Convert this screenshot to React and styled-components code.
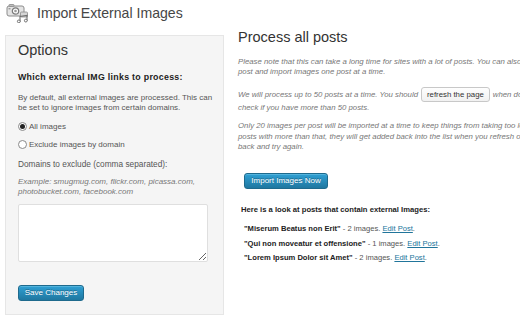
import React from 'react';
import styled, { createGlobalStyle } from 'styled-components';

const Global = createGlobalStyle`
  html, body { margin: 0; padding: 0; background: #fff; overflow: hidden; }
  body { font-family: "Liberation Sans", Arial, sans-serif; color: #333; }
  * { box-sizing: border-box; }
`;

const Page = styled.div`
  width: 520px;
  height: 320px;
  overflow: hidden;
  padding-left: 5px;
`;

const Header = styled.div`
  display: flex;
  align-items: center;
  height: 26px;
  gap: 8px;
  padding-left: 1px;
`;

const Title = styled.h1`
  margin: 0;
  font-size: 14.1px;
  font-weight: 400;
  color: #464646;
  line-height: 18px;
`;

const Columns = styled.div`
  display: flex;
  align-items: flex-start;
  margin-top: 2px;
`;

const Panel = styled.div`
  flex: 0 0 219px;
  height: 280px;
  margin-top: 7px;
  padding: 6px 8px 0 12px;
  background: #f5f5f5;
  border: 1px solid #e6e6e6;
  display: flex;
  flex-direction: column;
  align-items: flex-start;
`;

const PanelTitle = styled.h2`
  margin: 0;
  font-size: 14.5px;
  font-weight: 400;
  line-height: 16px;
  color: #333;
`;

const Label = styled.div`
  margin-top: ${p => p.$mt || 0}px;
  margin-left: ${p => p.$ml || 0}px;
  font-size: ${p => p.$size || 8}px;
  font-weight: 700;
  line-height: 11px;
  color: #222;
  letter-spacing: ${p => p.$ls || 0}px;
  white-space: nowrap;
`;

const Text = styled.p`
  margin: ${p => p.$mt || 0}px 0 0;
  font-size: ${p => p.$size || 8}px;
  line-height: ${p => p.$lh || 10}px;
  color: ${p => (p.$italic ? '#777' : '#555')};
  font-style: ${p => (p.$italic ? 'italic' : 'normal')};
  white-space: ${p => (p.$nowrap ? 'nowrap' : 'normal')};
`;

const RadioRow = styled.label`
  display: flex;
  align-items: center;
  gap: 2px;
  height: 12px;
  margin-top: ${p => p.$mt || 0}px;
  font-size: 8px;
  color: #555;
`;

const Radio = styled.span`
  width: 9px;
  height: 9px;
  border-radius: 50%;
  border: 1px solid #8a8a8a;
  background: #fff;
  display: flex;
  align-items: center;
  justify-content: center;
  &::after {
    content: '';
    width: 5px;
    height: 5px;
    border-radius: 50%;
    background: ${p => (p.$checked ? '#222' : 'transparent')};
  }
`;

const TextArea = styled.textarea`
  margin-top: 7px;
  width: 190px;
  height: 58px;
  border: 1px solid #dfdfdf;
  border-radius: 2px;
  background: #fff;
  font-family: inherit;
  font-size: 8px;
  padding: 2px;
`;

const BlueButton = styled.button`
  margin-top: ${p => p.$mt || 0}px;
  margin-left: ${p => p.$ml || 0}px;
  width: ${p => p.$w}px;
  height: 16px;
  padding: 0;
  border: 1px solid #1e6a8d;
  border-radius: 3px;
  background: linear-gradient(to bottom, #2fa0d4, #1f77a0);
  color: #fff;
  font-family: inherit;
  font-size: 8px;
  line-height: 14px;
  text-shadow: 0 -1px 0 rgba(0, 0, 0, 0.3);
  box-shadow: inset 0 1px 0 rgba(120, 200, 230, 0.5);
`;

const Main = styled.div`
  flex: 0 0 360px;
  margin-left: 14px;
`;

const MainTitle = styled.h2`
  margin: 0;
  font-size: 14.5px;
  font-weight: 400;
  line-height: 18px;
  color: #333;
`;

const GrayButton = styled.span`
  display: inline-block;
  vertical-align: middle;
  height: 15px;
  margin: -1px 3px;
  padding: 0 5px;
  border: 1px solid #c8c8c8;
  border-radius: 3px;
  background: linear-gradient(to bottom, #fefefe, #f1f1f1);
  font-style: normal;
  color: #333;
  line-height: 13px;
`;

const List = styled.ul`
  list-style: none;
  margin: 7.8px 0 0;
  padding: 0 0 0 6px;
`;

const Item = styled.li`
  font-size: 7.6px;
  line-height: 14.2px;
  color: #555;
  white-space: nowrap;
`;

const PostName = styled.b`
  color: #222;
`;

const Link = styled.a`
  color: #21759b;
  text-decoration: underline;
`;

function ScreenIcon() {
  return (
    <svg width="23" height="20" viewBox="0 0 23 20">
      <rect x="1" y="3" width="17" height="10" rx="2" fill="#e4e4e4" stroke="#8c8c8c" strokeWidth="1" />
      <rect x="3" y="1.5" width="5" height="2" rx="0.6" fill="#bdbdbd" stroke="#8c8c8c" strokeWidth="0.8" />
      <circle cx="9.5" cy="8" r="3.2" fill="#fafafa" stroke="#7a7a7a" strokeWidth="1.2" />
      <circle cx="9.5" cy="8" r="1.3" fill="#9a9a9a" />
      <rect x="2.5" y="5" width="2" height="1.4" fill="#9a9a9a" />
      <rect x="14.5" y="9" width="7" height="5" rx="1" fill="#d6d6d6" stroke="#8c8c8c" strokeWidth="0.8" />
      <path d="M14 19 L14 13.5 L21 12.5 L21 18" fill="none" stroke="#6f6f6f" strokeWidth="1.1" />
      <circle cx="12.8" cy="18.4" r="1.4" fill="#fff" stroke="#6f6f6f" strokeWidth="1" />
      <circle cx="19.8" cy="17.6" r="1.4" fill="#fff" stroke="#6f6f6f" strokeWidth="1" />
    </svg>
  );
}

export default function App() {
  return (
    <>
      <Global />
      <Page>
        <Header>
          <ScreenIcon />
          <Title>Import External Images</Title>
        </Header>
        <Columns>
          <Panel>
            <PanelTitle>Options</PanelTitle>
            <Label $mt={14} $size={8.8} $ls={0.3}>Which external IMG links to process:</Label>
            <Text $mt={10}>
              By default, all external images are processed. This can be set to ignore images from certain domains.
            </Text>
            <RadioRow $mt={7}>
              <Radio $checked />
              All images
            </RadioRow>
            <RadioRow $mt={6}>
              <Radio />
              Exclude images by domain
            </RadioRow>
            <Text $mt={8.5} $size={8.3}>Domains to exclude (comma separated):</Text>
            <Text $mt={8.5} $italic>
              Example: smugmug.com, flickr.com, picassa.com, photobucket.com, facebook.com
            </Text>
            <TextArea />
            <BlueButton $mt={23} $w={66}>Save Changes</BlueButton>
          </Panel>
          <Main>
            <MainTitle>Process all posts</MainTitle>
            <Text $mt={10.5} $lh={10.5} $size={7.8} $italic $nowrap>
              Please note that this can take a long time for sites with a lot of posts. You can also edit each
              <br />
              post and import images one post at a time.
            </Text>
            <Text $mt={10} $lh={13} $size={7.8} $italic $nowrap>
              We will process up to 50 posts at a time. You should<GrayButton>refresh the page</GrayButton>when done to
              <br />
              check if you have more than 50 posts.
            </Text>
            <Text $mt={7.5} $lh={10.2} $size={7.8} $italic $nowrap>
              Only 20 images per post will be imported at a time to keep things from taking too long. For
              <br />
              posts with more than that, they will get added back into the list when you refresh or come
              <br />
              back and try again.
            </Text>
            <BlueButton $mt={21} $ml={6} $w={84}>Import Images Now</BlueButton>
            <Label $mt={14.5} $ml={3} $size={7.65}>Here is a look at posts that contain external Images:</Label>
            <List>
              <Item>
                <PostName>"Miserum Beatus non Erit"</PostName> - 2 images. <Link href="#">Edit Post</Link>.
              </Item>
              <Item>
                <PostName>"Qui non moveatur et offensione"</PostName> - 1 images. <Link href="#">Edit Post</Link>.
              </Item>
              <Item>
                <PostName>"Lorem Ipsum Dolor sit Amet"</PostName> - 2 images. <Link href="#">Edit Post</Link>.
              </Item>
            </List>
          </Main>
        </Columns>
      </Page>
    </>
  );
}
